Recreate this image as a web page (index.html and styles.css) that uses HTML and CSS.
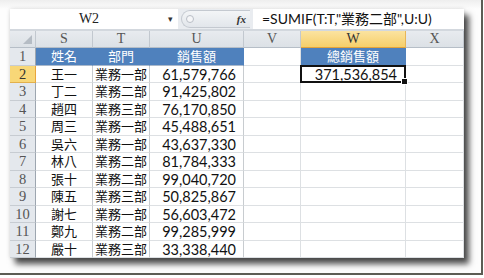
FILE: index.html
```html
<!DOCTYPE html>
<html lang="zh-Hant">
<head>
  <meta charset="UTF-8">
  <link rel="stylesheet" href="styles.css">
</head>
<body>

  <div class="frame">
    <div class="sheet">
      <div class="fbar">
        <div class="namebox">W2</div>
        <div class="drop">&#9662;</div>
        <div class="pill"><span class="knob"></span><span class="fx">fx</span></div>
        <div class="formula">=SUMIF(T:T,"業務二部",U:U)</div>
      </div>

      <div class="grid">
        <div class="hd corner"></div>
        <div class="hd col">S</div>
        <div class="hd col">T</div>
        <div class="hd col">U</div>
        <div class="hd col">V</div>
        <div class="hd col active">W</div>
        <div class="hd col">X</div>

        <div class="hd row">1</div>
        <div class="c title">姓名</div>
        <div class="c title">部門</div>
        <div class="c title">銷售額</div>
        <div class="c"></div>
        <div class="c title">總銷售額</div>
        <div class="c"></div>

        <div class="hd row active">2</div>
        <div class="c mid">王一</div>
        <div class="c mid">業務一部</div>
        <div class="c num">61,579,766</div>
        <div class="c"></div>
        <div class="c num sel">371,536,854<span class="handle"></span></div>
        <div class="c"></div>

        <div class="hd row">3</div>
        <div class="c mid">丁二</div>
        <div class="c mid">業務二部</div>
        <div class="c num">91,425,802</div>
        <div class="c"></div><div class="c"></div><div class="c"></div>

        <div class="hd row">4</div>
        <div class="c mid">趙四</div>
        <div class="c mid">業務三部</div>
        <div class="c num">76,170,850</div>
        <div class="c"></div><div class="c"></div><div class="c"></div>

        <div class="hd row">5</div>
        <div class="c mid">周三</div>
        <div class="c mid">業務一部</div>
        <div class="c num">45,488,651</div>
        <div class="c"></div><div class="c"></div><div class="c"></div>

        <div class="hd row">6</div>
        <div class="c mid">吳六</div>
        <div class="c mid">業務一部</div>
        <div class="c num">43,637,330</div>
        <div class="c"></div><div class="c"></div><div class="c"></div>

        <div class="hd row">7</div>
        <div class="c mid">林八</div>
        <div class="c mid">業務二部</div>
        <div class="c num">81,784,333</div>
        <div class="c"></div><div class="c"></div><div class="c"></div>

        <div class="hd row">8</div>
        <div class="c mid">張十</div>
        <div class="c mid">業務二部</div>
        <div class="c num">99,040,720</div>
        <div class="c"></div><div class="c"></div><div class="c"></div>

        <div class="hd row">9</div>
        <div class="c mid">陳五</div>
        <div class="c mid">業務三部</div>
        <div class="c num">50,825,867</div>
        <div class="c"></div><div class="c"></div><div class="c"></div>

        <div class="hd row">10</div>
        <div class="c mid">謝七</div>
        <div class="c mid">業務一部</div>
        <div class="c num">56,603,472</div>
        <div class="c"></div><div class="c"></div><div class="c"></div>

        <div class="hd row">11</div>
        <div class="c mid">鄭九</div>
        <div class="c mid">業務二部</div>
        <div class="c num">99,285,999</div>
        <div class="c"></div><div class="c"></div><div class="c"></div>

        <div class="hd row">12</div>
        <div class="c mid">嚴十</div>
        <div class="c mid">業務三部</div>
        <div class="c num">33,338,440</div>
        <div class="c"></div><div class="c"></div><div class="c"></div>
      </div>
    </div>
  </div>

</body>
</html>
```

FILE: styles.css
```css
body {
  margin: 0;
  background: #fff;
  font-family: 'Lato', 'Noto Sans CJK TC', sans-serif;
}

.frame {
  width: 471px;
  height: 264px;
  padding: 9px 0 0 10px;
  border-right: 2px solid #5c5c54;
  border-bottom: 2px solid #5c5c54;
  background: linear-gradient(#eeeeee, #fdfdfd 9px);
}

.sheet {
  width: 454px;
  height: 249px;
  background: #dfe3e8;
  box-shadow: 5px 6px 6px rgba(0, 0, 0, 0.7), 0 0 4px rgba(0, 0, 0, 0.15);
  overflow: hidden;
}

/* barra della formula */
.fbar {
  display: flex;
  align-items: center;
  height: 20px;
  background: #e9ecf0;
  border-bottom: 2px solid #d3d8de;
}

.namebox {
  width: 158px;
  height: 20px;
  line-height: 20px;
  background: #fff;
  text-align: center;
  font-family: 'Liberation Serif', serif;
  font-size: 14px;
  color: #222;
}

.drop {
  width: 10px;
  height: 20px;
  line-height: 20px;
  background: #fff;
  font-size: 9px;
  color: #333;
}

.pill {
  display: flex;
  align-items: center;
  justify-content: space-between;
  width: 69px;
  height: 18px;
  margin-left: 3px;
  padding: 0 4px 0 4px;
  box-sizing: border-box;
  border: 1px solid #c4c9d0;
  border-radius: 9px 0 0 9px;
  border-right: none;
  background: linear-gradient(#f3f5f7, #e2e6eb);
}

.knob {
  width: 6px;
  height: 6px;
  border-radius: 50%;
  border: 1px solid #b9bec6;
  background: #f5f6f8;
}

.fx {
  font-family: 'Liberation Serif', serif;
  font-style: italic;
  font-weight: bold;
  font-size: 11px;
  color: #333;
}

.formula {
  flex: 1;
  height: 20px;
  line-height: 20px;
  margin-left: 3px;
  padding-left: 9px;
  background: #fff;
  font-size: 14px;
  color: #111;
  white-space: nowrap;
}

/* griglia */
.grid {
  display: grid;
  grid-template-columns: 26px 57px 57px 94px 57px 105px 58px;
  grid-template-rows: 17px repeat(12, 17.5px);
  background: #fff;
}

.hd {
  background: linear-gradient(#e8ebef, #dce1e6);
  border-right: 1px solid #c2c8cf;
  border-bottom: 1px solid #b6bec7;
  color: #555;
  font-family: 'Liberation Serif', serif;
  font-size: 14px;
  text-align: center;
  line-height: 16px;
}

.hd.row {
  background: #e4e8ed;
  border-bottom: 1px solid #c7ccd2;
  border-right: 1px solid #9da6b0;
  line-height: 17px;
  font-size: 14.5px;
}

.hd.corner {
  position: relative;
}

.hd.corner::after {
  content: "";
  position: absolute;
  right: 3px;
  bottom: 3px;
  border-left: 9px solid transparent;
  border-bottom: 9px solid #b5bcc4;
}

.hd.active {
  background: linear-gradient(#fbe3a0, #f6cf6a);
  border-bottom: 1px solid #e3a33a;
  border-right: 1px solid #e8b658;
  color: #333;
}

.hd.row.active {
  background: #f8d777;
  border-bottom: 1px solid #e2b04c;
  border-right: 1px solid #e8a53c;
}

.c {
  border-right: 1px solid #dde0e3;
  border-bottom: 1px solid #dde0e3;
  font-size: 14.5px;
  line-height: 17px;
  color: #111;
  white-space: nowrap;
}

.c.title {
  background: #4f81bd;
  color: #fff;
  text-align: center;
  font-size: 13px;
  border-right: 1px solid #4f81bd;
  border-bottom: 1px solid #a9b8cb;
}

.c.mid {
  text-align: center;
  font-size: 13px;
  border-right: 1px solid #c8ccd0;
}

.c.num {
  text-align: right;
  padding-right: 7px;
  border-right: 1px solid #c8ccd0;
}

.c.sel {
  position: relative;
  border: 2px solid #111;
  margin: -1px 0 0 -1px;
  padding-right: 7px;
  line-height: 15px;
}

.handle {
  position: absolute;
  right: -4px;
  bottom: -4px;
  width: 5px;
  height: 5px;
  background: #111;
  border: 1px solid #fff;
}
```
